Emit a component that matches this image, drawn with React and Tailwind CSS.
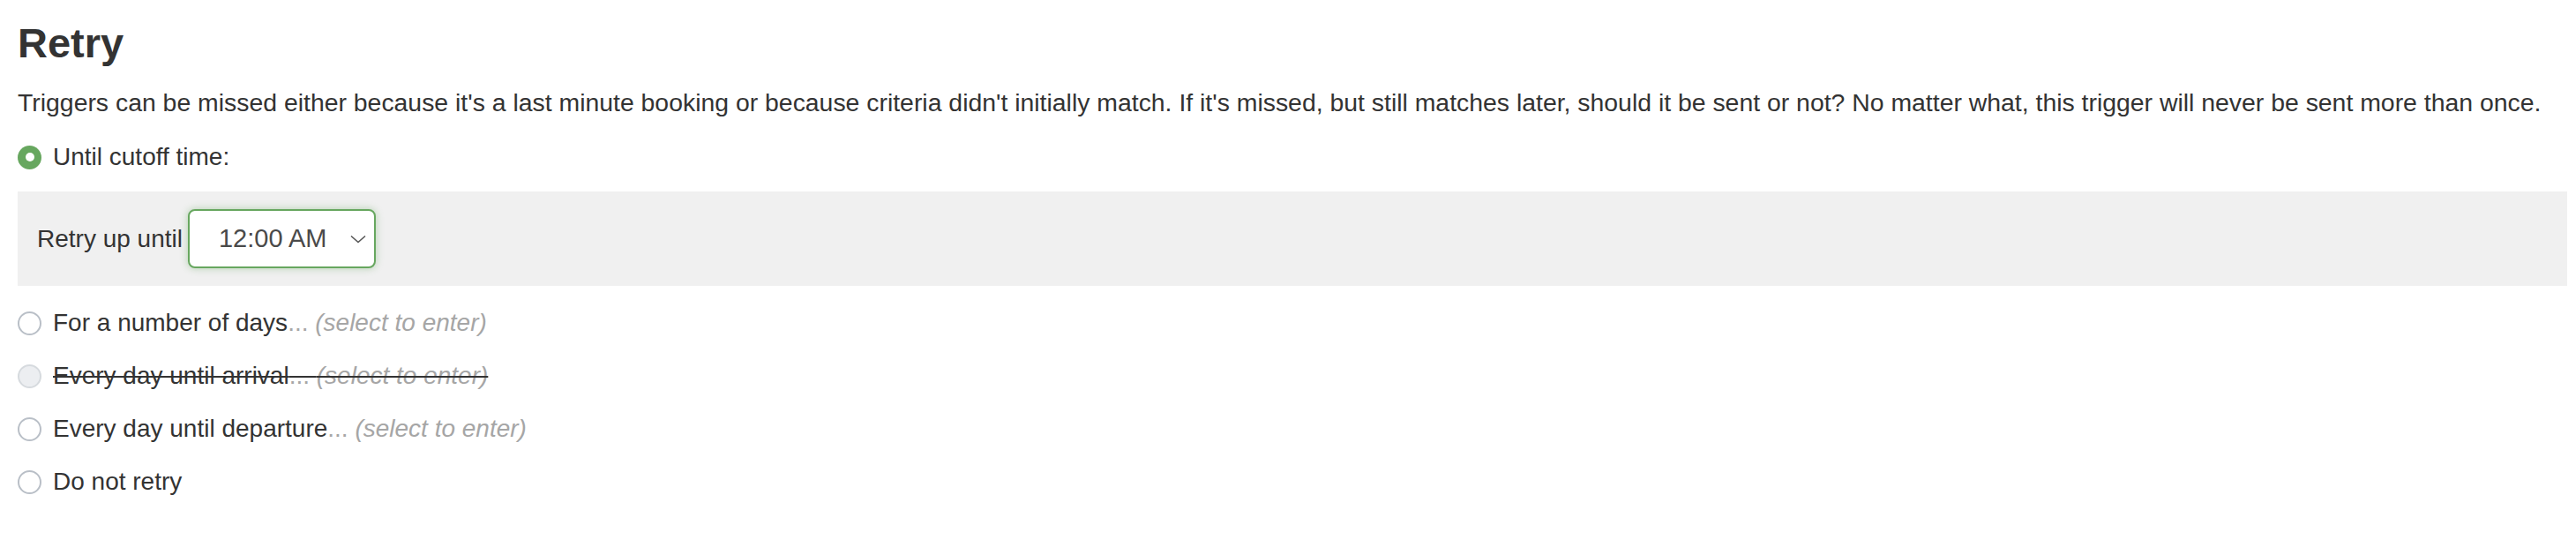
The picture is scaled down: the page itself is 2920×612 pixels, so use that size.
import { useState } from 'react'

const options = [
  { id: 'days', label: 'For a number of days' },
  { id: 'arrival', label: 'Every day until arrival', disabled: true },
  { id: 'departure', label: 'Every day until departure' },
  { id: 'none', label: 'Do not retry', plain: true },
]

function Radio({ checked, disabled }) {
  if (checked) {
    return (
      <span className="flex h-[27px] w-[27px] shrink-0 items-center justify-center rounded-full bg-[#67a75f]">
        <span className="h-[10px] w-[10px] rounded-full bg-white" />
      </span>
    )
  }
  return (
    <span
      className={
        disabled
          ? 'h-[27px] w-[27px] shrink-0 rounded-full border-2 border-[#d6dade] bg-[#eceef1]'
          : 'h-[27px] w-[27px] shrink-0 rounded-full border-2 border-[#b9bfc7] bg-white'
      }
    />
  )
}

function TimeSelect() {
  return (
    <div className="flex h-[67px] w-[213px] items-center justify-between rounded-[8px] border-2 border-[#67a75f] bg-white pl-[33px] pr-[8px] shadow-[0_0_9px_rgba(103,167,95,0.45)]">
      <span className="text-[29px] leading-none text-[#4a4a4a]">12:00 AM</span>
      <svg width="18" height="10" viewBox="0 0 18 10" fill="none" className="mr-[1px]">
        <path d="M1 1.5 L9 8.5 L17 1.5" stroke="#555" strokeWidth="1.6" />
      </svg>
    </div>
  )
}

export default function App() {
  const [selected] = useState('cutoff')

  return (
    <div className="min-h-[612px] bg-white pl-[20px] pr-[10px] font-['Liberation_Sans',Arial,sans-serif] text-[#333]">
      <h2 className="pt-[23px] text-[47px] font-bold leading-[52px] text-[#333]">Retry</h2>

      <p className="mt-[23px] text-[28.4px] leading-[36px]">
        Triggers can be missed either because it's a last minute booking or because criteria didn't initially match. If it's missed, but still matches later, should it be sent or not? No matter what, this trigger will never be sent more than once.
      </p>

      <label className="mt-[26px] flex h-[36px] items-center gap-[13px] text-[28px]">
        <Radio checked={selected === 'cutoff'} />
        <span>Until cutoff time:</span>
      </label>

      <div className="mt-[21px] flex items-center bg-[#f0f0f0] px-[22px] py-[20px] text-[28px]">
        <span className="mr-[6px]">Retry up until</span>
        <TimeSelect />
      </div>

      <div className="mt-[24px] flex flex-col gap-[24px]">
        {options.map((opt) => (
          <label key={opt.id} className="flex h-[36px] items-center gap-[13px] text-[28px]">
            <Radio checked={selected === opt.id} disabled={opt.disabled} />
            <span className={opt.disabled ? 'line-through decoration-[#333] decoration-2' : ''}>
              {opt.label}
              {!opt.plain && (
                <span className="text-[#a6a6a6]">
                  ... <span className="italic">(select to enter)</span>
                </span>
              )}
            </span>
          </label>
        ))}
      </div>
    </div>
  )
}
